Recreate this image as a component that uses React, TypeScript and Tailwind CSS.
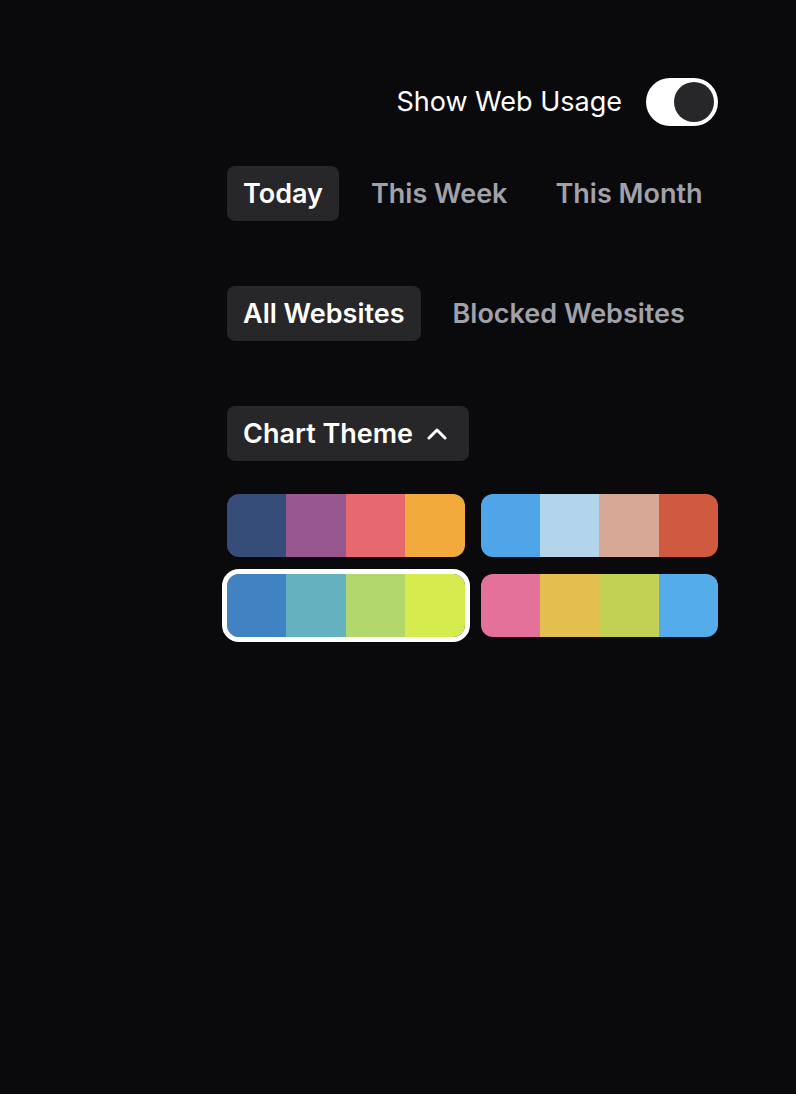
import React, { useState } from 'react';

const palettes: string[][] = [
  ['#364d7a', '#97578f', '#e8686f', '#f2aa3c'],
  ['#50a5e8', '#b3d5ec', '#d7a896', '#d05a40'],
  ['#4082c2', '#66b1c0', '#b2d76c', '#d6eb4d'],
  ['#e3719a', '#e3bf4f', '#c2d053', '#55acea'],
];

const Tab: React.FC<{ label: string; active: boolean; onClick: () => void }> = ({ label, active, onClick }) => (
  <button
    type="button"
    onClick={onClick}
    className={`h-[55px] px-4 rounded-lg text-[27px] font-semibold leading-none whitespace-nowrap ${
      active ? 'bg-[#27272a] text-white' : 'text-[#a1a1aa]'
    }`}
  >
    {label}
  </button>
);

export default function App() {
  const [webUsage, setWebUsage] = useState(true);
  const [range, setRange] = useState('Today');
  const [scope, setScope] = useState('All Websites');
  const [theme, setTheme] = useState(2);

  return (
    <div
      className="min-h-[1094px] w-full bg-[#0a0a0c] flex justify-end pr-[78px] pt-[78px]"
      style={{ fontFamily: 'Inter, "Noto Sans", sans-serif' }}
    >
      <div className="w-[491px] flex flex-col">
        <div className="flex items-center justify-end gap-6">
          <span className="text-[27px] text-white whitespace-nowrap">Show Web Usage</span>
          <button
            type="button"
            onClick={() => setWebUsage(!webUsage)}
            className={`w-[72px] h-[48px] rounded-full p-1 flex ${
              webUsage ? 'bg-white justify-end' : 'bg-[#3f3f46] justify-start'
            }`}
          >
            <span className="w-10 h-10 rounded-full bg-[#27272a]" />
          </button>
        </div>

        <div className="flex gap-4 mt-10">
          {['Today', 'This Week', 'This Month'].map((r) => (
            <Tab key={r} label={r} active={range === r} onClick={() => setRange(r)} />
          ))}
        </div>

        <div className="flex gap-4 mt-[65px]">
          {['All Websites', 'Blocked Websites'].map((s) => (
            <Tab key={s} label={s} active={scope === s} onClick={() => setScope(s)} />
          ))}
        </div>

        <div className="mt-[65px] flex">
          <button
            type="button"
            className="h-[55px] px-4 rounded-lg bg-[#27272a] text-white text-[27px] font-semibold leading-none flex items-center whitespace-nowrap"
          >
            Chart Theme
            <svg
              className="w-[20px] h-[12px] ml-[14px] mr-[6px]"
              viewBox="0 0 20 12"
              fill="none"
              stroke="currentColor"
              strokeWidth={3}
              strokeLinecap="round"
              strokeLinejoin="round"
            >
              <polyline points="2,10 10,2 18,10" />
            </svg>
          </button>
        </div>

        <div className="grid grid-cols-2 gap-x-4 gap-y-[17px] mt-[33px]">
          {palettes.map((p, i) => (
            <button
              key={i}
              type="button"
              onClick={() => setTheme(i)}
              className={`h-[63px] rounded-xl overflow-hidden flex ${
                theme === i ? 'outline-[5px] outline-solid outline-white' : ''
              }`}
            >
              {p.map((c) => (
                <span key={c} className="flex-1 h-full" style={{ backgroundColor: c }} />
              ))}
            </button>
          ))}
        </div>
      </div>
    </div>
  );
}
